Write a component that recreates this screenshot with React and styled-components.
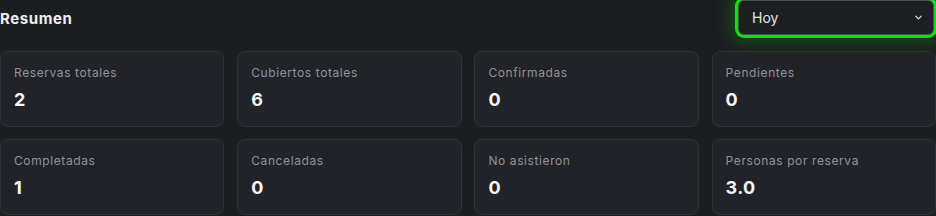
import styled, { createGlobalStyle } from "styled-components";

const stats = [
  { label: "Reservas totales", value: "2" },
  { label: "Cubiertos totales", value: "6" },
  { label: "Confirmadas", value: "0" },
  { label: "Pendientes", value: "0" },
  { label: "Completadas", value: "1" },
  { label: "Canceladas", value: "0" },
  { label: "No asistieron", value: "0" },
  { label: "Personas por reserva", value: "3.0" },
];

const App = () => {
  return (
    <>
      <GlobalStyle />
      <Summary>
        <Header>
          <Title>Resumen</Title>
          <SelectWrap>
            <Select defaultValue="hoy">
              <option value="hoy">Hoy</option>
              <option value="semana">Esta semana</option>
              <option value="mes">Este mes</option>
            </Select>
            <Chevron viewBox="0 0 24 24">
              <path d="M6 9l6 6 6-6" />
            </Chevron>
          </SelectWrap>
        </Header>

        <Grid>
          {stats.map((s) => (
            <Card key={s.label}>
              <Label>{s.label}</Label>
              <Value>{s.value}</Value>
            </Card>
          ))}
        </Grid>
      </Summary>
    </>
  );
};

const GlobalStyle = createGlobalStyle`
  html, body {
    margin: 0;
    background: #1b1d21;
    font-family: Inter, "Noto Sans", sans-serif;
  }
`;

const Summary = styled.div`
  width: 936px;
  height: 216px;
  overflow: hidden;
  background: #1b1d21;
`;

const Header = styled.div`
  display: flex;
  justify-content: space-between;
  align-items: center;
  height: 36px;
  margin-bottom: 15px;
`;

const Title = styled.h2`
  margin: 0;
  font-size: 15px;
  font-weight: 700;
  color: #eef0f3;
  letter-spacing: 0.6px;
`;

const SelectWrap = styled.div`
  position: relative;
  width: 196px;
  height: 35px;
  margin-right: 2px;
  align-self: flex-start;
`;

const Select = styled.select`
  appearance: none;
  width: 100%;
  height: 100%;
  box-sizing: border-box;
  padding: 0 30px 0 13px;
  background: #1c1e22;
  color: #e6e8eb;
  font-family: Inter, "Noto Sans", sans-serif;
  font-size: 14px;
  border: 1px solid #4a4e55;
  border-radius: 6px;
  outline: none;
  box-shadow: 0 0 0 3px #0fe00f, 0 0 18px 7px rgba(20, 130, 20, 0.5);
`;

const Chevron = styled.svg`
  position: absolute;
  right: 10px;
  top: 12px;
  width: 11px;
  height: 11px;
  fill: none;
  stroke: #d4d6da;
  stroke-width: 3;
  stroke-linecap: round;
  stroke-linejoin: round;
  pointer-events: none;
`;

const Grid = styled.div`
  display: grid;
  grid-template-columns: repeat(4, 1fr);
  column-gap: 12.8px;
  row-gap: 12px;
`;

const Card = styled.div`
  box-sizing: border-box;
  height: 76px;
  padding: 13px 13px;
  background: #212328;
  border: 1px solid #2f3238;
  border-radius: 8px;
  display: flex;
  flex-direction: column;
  gap: 9px;
`;

const Label = styled.div`
  font-size: 12px;
  color: #8f949b;
  letter-spacing: 0.6px;
`;

const Value = styled.div`
  font-size: 18px;
  font-weight: 700;
  color: #f4f6f8;
  letter-spacing: 0.3px;
`;

export default App;
